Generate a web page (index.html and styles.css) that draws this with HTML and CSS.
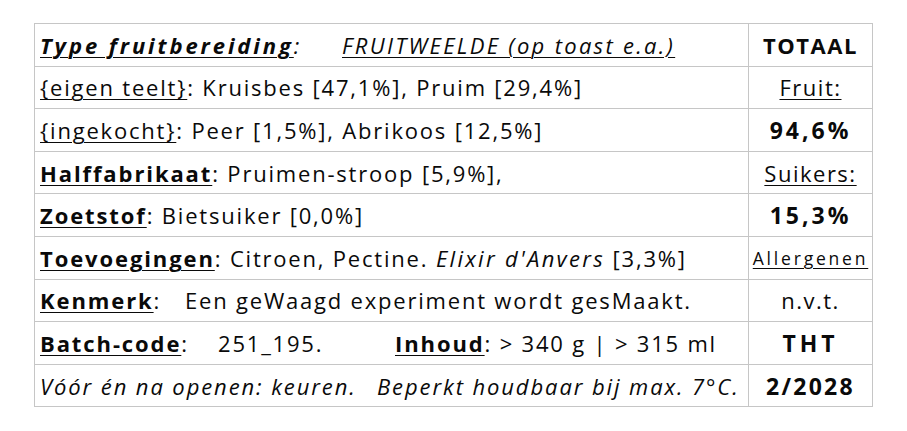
FILE: index.html
```html
<!DOCTYPE html>
<html>
<head>
<meta charset="utf-8">
<link rel="stylesheet" href="styles.css">
</head>
<body>
<div class="page">
<table class="label">
  <tr>
    <td class="main"><span class="lead lead-head"><span class="u bi">Type fruitbereiding</span><span class="i">:</span></span><span class="u i hd">FRUITWEELDE (op toast e.a.)</span></td>
    <td class="side b">TOTAAL</td>
  </tr>
  <tr>
    <td class="main"><span class="u">{eigen teelt}</span>: Kruisbes [47,1%], Pruim [29,4%]</td>
    <td class="side"><span class="u">Fruit:</span></td>
  </tr>
  <tr>
    <td class="main"><span class="u">{ingekocht}</span>: Peer [1,5%], Abrikoos [12,5%]</td>
    <td class="side b num">94,6%</td>
  </tr>
  <tr>
    <td class="main"><span class="u b">Halffabrikaat</span>: Pruimen-stroop [5,9%],</td>
    <td class="side"><span class="u">Suikers:</span></td>
  </tr>
  <tr>
    <td class="main"><span class="u b">Zoetstof</span>: Bietsuiker [0,0%]</td>
    <td class="side b num">15,3%</td>
  </tr>
  <tr>
    <td class="main"><span class="u b">Toevoegingen</span>: Citroen, Pectine. <span class="i em">Elixir d'Anvers</span> [3,3%]</td>
    <td class="side small"><span class="u">Allergenen</span></td>
  </tr>
  <tr>
    <td class="main"><span class="lead lead-kenmerk"><span class="u b">Kenmerk</span>:</span>Een geWaagd experiment wordt gesMaakt.</td>
    <td class="side">n.v.t.</td>
  </tr>
  <tr>
    <td class="main"><span class="lead lead-batch"><span class="lead lead-code"><span class="u b">Batch-code</span>:</span>251_195.</span><span class="u b">Inhoud</span>: &gt; 340 g | &gt; 315 ml</td>
    <td class="side b num tht">THT</td>
  </tr>
  <tr>
    <td class="main i foot"><span class="lead lead-foot">Vóór én na openen: keuren.</span>Beperkt houdbaar bij max. 7°C.</td>
    <td class="side b num date">2/2028</td>
  </tr>
</table>
</div>
</body>
</html>
```
FILE: styles.css
```css
html, body {
  margin: 0;
  padding: 0;
  background: #ffffff;
}
.page {
  padding: 23px 0 0 34px;
}
.label {
  border-collapse: collapse;
  width: 839px;
  font-family: "Open Sans", "Noto Sans", sans-serif;
  font-size: 22px;
  color: #0a0a0a;
  letter-spacing: 1.8px;
}
.label td {
  border: 1px solid #c6c6c6;
  height: 42.6px;
  padding: 0 5px;
  white-space: nowrap;
  vertical-align: middle;
  box-sizing: border-box;
}
.label td.side {
  width: 124px;
  text-align: center;
  padding: 0;
  letter-spacing: 1.5px;
}
.u { text-decoration: underline; text-underline-offset: 3px; text-decoration-thickness: 1px; }
.b { font-weight: 700; letter-spacing: 1.9px; }
.i { font-style: italic; }
.em { letter-spacing: 2.3px; }
.bi { font-weight: 700; font-style: italic; letter-spacing: 2.9px; }
.hd { letter-spacing: 2.3px; }
.label td.side.b { letter-spacing: 1.5px; }
.label td.side.num { font-size: 23px; letter-spacing: 3px; }
.label td.side.tht { letter-spacing: 3.9px; }
.label td.side.date { letter-spacing: 2.3px; }
.label td.side.small { font-size: 17.5px; letter-spacing: 2.8px; }
.foot { letter-spacing: 1.9px; }
.lead { display: inline-block; }
.lead-head { width: 302px; }
.lead-kenmerk { width: 145px; }
.lead-batch { width: 355px; }
.lead-code { width: 178px; }
.lead-foot { width: 337px; }
```
